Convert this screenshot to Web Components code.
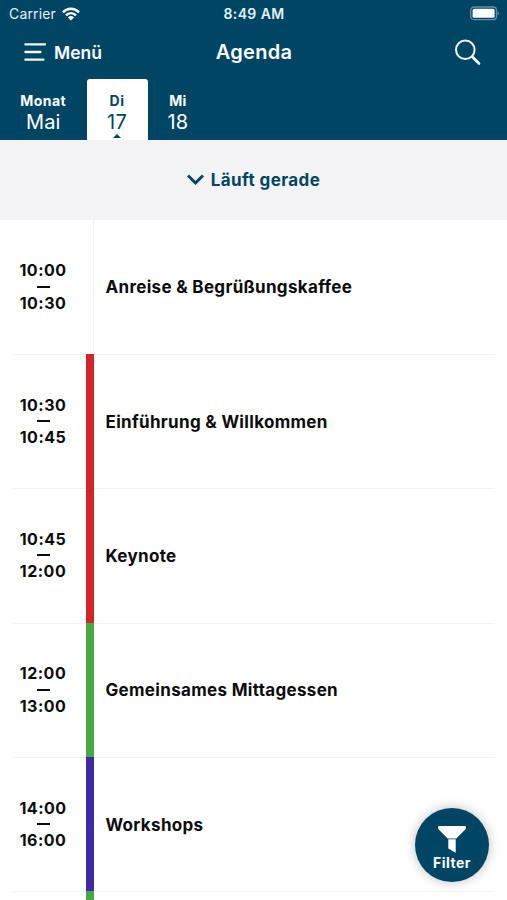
<!DOCTYPE html>
<html lang="de">
<head>
<meta charset="utf-8">
<meta name="viewport" content="width=device-width, initial-scale=1">
<title>Agenda</title>
<style>
  html, body {
    height: 100%;
    margin: 0;
    overflow: hidden;
  }

  body {
    --brand: #004664;
    --line: #f2f2f4;
    font-family: Inter, "Liberation Sans", sans-serif;
    color: #0c0c0e;
    background: #fff;
  }
</style>
</head>
<body>
<agenda-app>
  <status-bar slot="header" carrier="Carrier" time="8:49 AM"></status-bar>
  <nav-bar slot="header" menu="Menü">Agenda</nav-bar>
  <day-tabs slot="header">
    <day-tab label="Monat" wide>Mai</day-tab>
    <day-tab label="Di" active>17</day-tab>
    <day-tab label="Mi">18</day-tab>
  </day-tabs>
  <now-toggle>Läuft gerade</now-toggle>
  <agenda-item start="10:00" end="10:30">Anreise &amp; Begrüßungskaffee</agenda-item>
  <agenda-item start="10:30" end="10:45" color="#d42427">Einführung &amp; Willkommen</agenda-item>
  <agenda-item start="10:45" end="12:00" color="#d42427">Keynote</agenda-item>
  <agenda-item start="12:00" end="13:00" color="#48a842">Gemeinsames Mittagessen</agenda-item>
  <agenda-item start="14:00" end="16:00" color="#3f2ba3">Workshops</agenda-item>
  <agenda-item color="#48a842"></agenda-item>
  <filter-button slot="floating">Filter</filter-button>
</agenda-app>

<script>
class BaseElement extends HTMLElement {
  constructor() {
    super();
    this.attachShadow({ mode: 'open' });
  }

  connectedCallback() {
    this.shadowRoot.innerHTML = this.template();
  }
}

class AgendaApp extends BaseElement {
  template() {
    return `
      <style>
        :host {
          display: block;
          position: relative;
          height: 900px;
          overflow: hidden;
        }

        header {
          height: 140px;
          background: var(--brand);
          color: #fff;
        }
      </style>
      <header><slot name="header"></slot></header>
      <main><slot></slot></main>
      <slot name="floating"></slot>
    `;
  }
}

class StatusBar extends BaseElement {
  template() {
    return `
      <style>
        :host {
          display: grid;
          grid-template-columns: 1fr auto 1fr;
          align-items: center;
          height: 27px;
          box-sizing: border-box;
          padding: 0 7px 0 9px;
          font-size: 14px;
          color: #e4f0f5;
        }

        .carrier {
          display: flex;
          align-items: center;
          gap: 6px;
          letter-spacing: 0.15px;
        }

        .time {
          font-weight: 600;
          letter-spacing: 0.4px;
          margin-right: 1px;
        }

        .battery {
          justify-self: end;
        }

        svg {
          display: block;
        }
      </style>
      <span class="carrier">
        ${this.getAttribute('carrier')}
        <svg width="18" height="14" viewBox="0 0 18 14" fill="none" stroke="#fff" stroke-width="2.5">
          <path d="M1 5.3C5.6.6 12.4.6 17 5.3M4 8.4C6.9 5.5 11.1 5.5 14 8.4"/>
          <path d="M5.9 10.4Q9 7.8 12.1 10.4L9 13.5Z" fill="#fff" stroke="none"/>
        </svg>
      </span>
      <span class="time">${this.getAttribute('time')}</span>
      <svg class="battery" width="30" height="15" viewBox="0 0 30 15">
        <rect x=".7" y="1" width="25.8" height="12.6" rx="3.3" fill="none" stroke="#668fa2" stroke-width="1.3"/>
        <rect x="2.6" y="2.8" width="22" height="9" rx="1.6" fill="#fff"/>
        <path d="M27.7 5.2Q30 7.3 27.7 9.4Z" fill="#7599a9"/>
      </svg>
    `;
  }
}

class NavBar extends BaseElement {
  template() {
    return `
      <style>
        :host {
          display: grid;
          grid-template-columns: 1fr auto 1fr;
          align-items: center;
          height: 52px;
          box-sizing: border-box;
          padding: 0 25px 2px 23px;
          font-weight: 600;
        }

        .menu {
          display: flex;
          align-items: center;
          gap: 8px;
          font-size: 17.5px;
        }

        h1 {
          margin: 0 0 0 3px;
          font-size: 20px;
          font-weight: 600;
          letter-spacing: 0.3px;
        }

        .search {
          justify-self: end;
        }

        svg {
          display: block;
          fill: none;
          stroke: #f3f8fa;
          stroke-linecap: round;
        }
      </style>
      <span class="menu">
        <svg width="23" height="20" viewBox="0 0 23 20" stroke-width="2.3">
          <path d="M2.4 2.3H22M2.4 10H17.4M2.4 17.7H20.4"/>
        </svg>
        ${this.getAttribute('menu')}
      </span>
      <h1><slot></slot></h1>
      <svg class="search" width="28" height="28" viewBox="0 0 28 28">
        <circle cx="11.3" cy="11.8" r="9.3" stroke-width="2"/>
        <path d="M18.3 18.8L25 25.5" stroke-width="2.7"/>
      </svg>
    `;
  }
}

class DayTabs extends BaseElement {
  template() {
    return `
      <style>
        :host {
          display: flex;
          height: 61px;
        }
      </style>
      <slot></slot>
    `;
  }
}

class DayTab extends BaseElement {
  template() {
    return `
      <style>
        :host {
          display: flex;
          flex-direction: column;
          align-items: center;
          position: relative;
          box-sizing: border-box;
          width: 61px;
          padding-top: 13px;
        }

        :host([wide]) {
          width: 86.5px;
        }

        :host([active]) {
          background: #fff;
          color: var(--brand);
          border-radius: 3px 3px 0 0;
        }

        /* pointer at the lower edge of the selected day */
        :host([active])::after {
          content: "";
          position: absolute;
          bottom: 2px;
          left: calc(50% - 4px);
          border: 4px solid transparent;
          border-top: 0;
          border-bottom-color: var(--brand);
        }

        .label {
          font-size: 14px;
          line-height: 18px;
          font-weight: 700;
          letter-spacing: 0.45px;
        }

        .value {
          font-size: 20px;
          line-height: 25px;
          letter-spacing: 0.2px;
        }
      </style>
      <span class="label">${this.getAttribute('label')}</span>
      <span class="value"><slot></slot></span>
    `;
  }
}

class NowToggle extends BaseElement {
  template() {
    return `
      <style>
        :host {
          display: flex;
          align-items: center;
          justify-content: center;
          gap: 7px;
          height: 79.5px;
          background: #f3f3f6;
          color: var(--brand);
          font-size: 17px;
          font-weight: 650;
          letter-spacing: 0.4px;
        }
      </style>
      <svg width="17" height="11" viewBox="0 0 17 11" fill="none" stroke="currentColor" stroke-width="2.9">
        <path d="M1 1.5L8.5 9L16 1.5"/>
      </svg>
      <slot></slot>
    `;
  }
}

class AgendaItem extends BaseElement {
  template() {
    const start = this.getAttribute('start');
    const end = this.getAttribute('end');
    const color = this.getAttribute('color');
    return `
      <style>
        :host {
          display: grid;
          grid-template-columns: 86px 8px 1fr;
          height: 134.35px;
          font-weight: 650;
          background: linear-gradient(var(--line), var(--line)) 13px 0 / 482px 1px no-repeat;
        }

        :host(:first-of-type) {
          background: none;
        }

        .time {
          display: flex;
          flex-direction: column;
          align-items: center;
          justify-content: center;
          gap: 5px;
          font-size: 16px;
          line-height: 20.5px;
          letter-spacing: 0.5px;
        }

        .dash {
          width: 13px;
          height: 2px;
          margin: 0;
          border: 0;
          background: #0c0c0e;
        }

        .bar {
          background: ${color || 'linear-gradient(var(--line), var(--line)) 100% 0 / 1.5px 100% no-repeat'};
        }

        .title {
          align-self: center;
          padding: 1px 0 0 11.5px;
          font-size: 17px;
          letter-spacing: 0.32px;
        }
      </style>
      <div class="time">${start ? `<span>${start}</span><hr class="dash"><span>${end}</span>` : ''}</div>
      <div class="bar"></div>
      <div class="title"><slot></slot></div>
    `;
  }
}

class FilterButton extends BaseElement {
  template() {
    return `
      <style>
        :host {
          display: flex;
          flex-direction: column;
          align-items: center;
          position: absolute;
          right: 18px;
          bottom: 18px;
          box-sizing: border-box;
          width: 74px;
          height: 74px;
          padding-top: 17px;
          border-radius: 50%;
          background: var(--brand);
          color: #fff;
          font-size: 14px;
          line-height: 18px;
          font-weight: 700;
          letter-spacing: 0.5px;
          box-shadow: 0 0 12px rgba(0, 0, 0, 0.25);
        }
      </style>
      <svg width="28" height="29" viewBox="0 0 28 29" fill="#fff">
        <path d="M0 1.9Q0 .9 1 .9H27Q28 .9 28 1.9V2.9Q28 3.9 27 4.8L18.3 13.4H9.7L1 4.8Q0 3.9 0 2.9Z"/>
        <path d="M10.3 14.3H17.7V27.8L10.3 23.5Z"/>
      </svg>
      <slot></slot>
    `;
  }
}

customElements.define('agenda-app', AgendaApp);
customElements.define('status-bar', StatusBar);
customElements.define('nav-bar', NavBar);
customElements.define('day-tabs', DayTabs);
customElements.define('day-tab', DayTab);
customElements.define('now-toggle', NowToggle);
customElements.define('agenda-item', AgendaItem);
customElements.define('filter-button', FilterButton);
</script>
</body>
</html>
